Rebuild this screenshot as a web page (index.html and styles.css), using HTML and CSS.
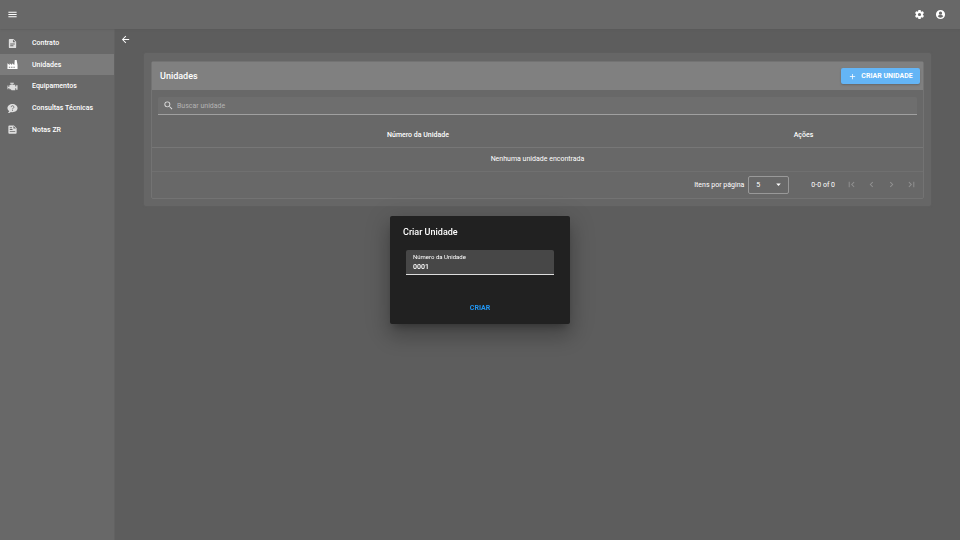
FILE: index.html
```
<!DOCTYPE html>
<html lang="pt-BR">
<head>
<meta charset="utf-8">
<meta name="viewport" content="width=device-width, initial-scale=1">
<title>Unidades</title>
<link rel="stylesheet" href="styles.css">
</head>
<body>
<header class="topbar">
  <button class="icon-btn" type="button" aria-label="Menu"><svg class="icon" viewBox="0 0 24 24"><path d="M3 6h18v2H3V6m0 5h18v2H3v-2m0 5h18v2H3v-2z"/></svg></button>
  <div class="topbar-actions">
    <button class="icon-btn" type="button" aria-label="Configurações"><svg class="icon" viewBox="0 0 24 24"><path d="M12 15.5A3.5 3.5 0 0 1 8.500 12 3.500 3.500 0 0 1 12 8.500a3.500 3.500 0 0 1 3.500 3.500 3.500 3.500 0 0 1-3.500 3.500m7.430-2.530c.04-.32.07-.64.07-.97s-.03-.66-.07-1l2.110-1.630c.19-.15.24-.42.12-.64l-2-3.460c-.12-.22-.39-.31-.61-.22l-2.490 1c-.52-.39-1.060-.73-1.690-.98l-.37-2.650A.506.506 0 0 0 14 2h-4c-.25 0-.46.18-.5.42l-.37 2.650c-.63.25-1.170.59-1.690.98l-2.490-1c-.22-.09-.49 0-.61.22l-2 3.460c-.13.22-.07.49.12.64L4.570 11c-.04.34-.07.67-.07 1s.03.65.07.970l-2.110 1.660c-.19.15-.25.42-.12.64l2 3.460c.12.22.39.3.61.22l2.490-1.010c.52.4 1.060.74 1.690.99l.37 2.650c.04.24.25.42.5.42h4c.25 0 .46-.18.5-.42l.37-2.650c.63-.26 1.170-.59 1.690-.99l2.490 1.010c.22.08.49 0 .61-.22l2-3.460c.12-.22.07-.49-.12-.64l-2.110-1.660z"/></svg></button>
    <button class="icon-btn" type="button" aria-label="Conta"><svg class="icon" viewBox="0 0 24 24"><path fill-rule="evenodd" d="M12 2a10 10 0 1 0 0 20 10 10 0 0 0 0-20zm0 3.500a3.500 3.500 0 1 1 0 7 3.500 3.500 0 0 1 0-7zM12 19.200a7.200 7.200 0 0 1-6-3.200c.03-2 4-3.100 6-3.100s5.970 1.100 6 3.100a7.200 7.200 0 0 1-6 3.200z"/></svg></button>
  </div>
</header>
<div class="shell">
  <nav class="sidebar" aria-label="Principal">
    <ul class="menu">
      <li><a class="menu-link" href="#contrato"><svg class="icon" viewBox="0 0 24 24"><path fill-rule="evenodd" d="M6 2h8l6 6v12a2 2 0 0 1-2 2H6a2 2 0 0 1-2-2V4a2 2 0 0 1 2-2zm7 1.500V9h5.500L13 3.500zM7 12v2h10v-2H7zm0 4v2h7v-2H7z"/></svg>Contrato</a></li>
      <li><a class="menu-link active" aria-current="page" href="#unidades"><svg class="icon" viewBox="0 0 24 24"><path fill-rule="evenodd" d="M1 22V9l5 4V9l5 4V9l5 4 1-11h4l2 11v9H1zm3-5v2h3v-2H4zm5 0v2h3v-2H9zm5 0v2h3v-2h-3z"/></svg>Unidades</a></li>
      <li><a class="menu-link" href="#equipamentos"><svg class="icon" viewBox="0 0 24 24"><path d="M7 4v2h3v2H7l-2 2v3H3v-3H1v8h2v-3h2v3h3l2 2h8v-4h2v3h3V9h-3v3h-2V8h-6V6h3V4H7z"/></svg>Equipamentos</a></li>
      <li><a class="menu-link" href="#consultas"><svg class="icon" viewBox="0 0 24 24"><path d="M12 2c5.500 0 11 3.580 11 9s-5 9-11 9c-1.240 0-2.430-.18-3.530-.5C5.550 22 2 22 2 22c2.330-2.330 2.700-3.900 2.750-4.500C2.500 16 1 14 1 11c0-5 5-9 11-9z"/><path class="icon-cut" d="M9 9a3 3 0 1 1 4.500 2.600c-1 .6-1.500 1-1.500 1.900M12 15v2"/></svg>Consultas Técnicas</a></li>
      <li><a class="menu-link" href="#notas"><svg class="icon" viewBox="0 0 24 24"><path fill-rule="evenodd" d="M5 3h10l6 6v10a2 2 0 0 1-2 2H5a2 2 0 0 1-2-2V5a2 2 0 0 1 2-2zm9 1.500V10h5.500L14 4.500zM6 7v2h5V7H6zm0 4v2h6v-2H6zm0 4v2h12v-2H6z"/></svg>Notas ZR</a></li>
    </ul>
  </nav>
  <main class="content">
    <button class="icon-btn back" type="button" aria-label="Voltar"><svg class="icon" viewBox="0 0 24 24"><path d="M20 11v2H8l5.500 5.500-1.420 1.420L4.160 12l7.920-7.920L13.500 5.500 8 11h12z"/></svg></button>
    <div class="panel">
      <section class="card">
        <div class="card-head">
          <h1 class="title">Unidades</h1>
          <button class="create-btn" type="button"><svg class="icon-small" viewBox="0 0 24 24"><path d="M19 13h-6v6h-2v-6H5v-2h6V5h2v6h6v2z"/></svg>CRIAR UNIDADE</button>
        </div>
        <label class="search">
          <svg class="icon" viewBox="0 0 24 24"><path d="M9.500 3A6.500 6.500 0 0 1 16 9.500c0 1.610-.59 3.090-1.560 4.230l.27.27h.79l5 5-1.500 1.500-5-5v-.79l-.27-.27A6.516 6.516 0 0 1 9.500 16a6.500 6.500 0 0 1 0-13m0 2C7 5 5 7 5 9.500S7 14 9.500 14 14 12 14 9.500 12 5 9.500 5z"/></svg>
          <input type="text" placeholder="Buscar unidade" aria-label="Buscar unidade">
        </label>
        <table class="table">
          <thead><tr><th class="col-number" scope="col">Número da Unidade</th><th scope="col">Ações</th></tr></thead>
          <tbody><tr><td colspan="2">Nenhuma unidade encontrada</td></tr></tbody>
        </table>
        <div class="pager">
          <label for="page-size">Itens por página</label>
          <div class="select-box">
            <select id="page-size"><option>5</option><option>10</option></select>
            <svg class="icon select-arrow" viewBox="0 0 24 24"><path d="M7 10l5 5 5-5H7z"/></svg>
          </div>
          <span class="range">0-0 of 0</span>
          <div class="pages">
            <button class="icon-btn" type="button" disabled aria-label="Primeira página"><svg class="icon" viewBox="0 0 24 24"><path d="M18.410 16.590L13.820 12l4.590-4.590L17 6l-6 6 6 6 1.410-1.410M6 6h2v12H6V6z"/></svg></button>
            <button class="icon-btn" type="button" disabled aria-label="Página anterior"><svg class="icon" viewBox="0 0 24 24"><path d="M15.410 16.580L10.830 12l4.580-4.590L14 6l-6 6 6 6 1.410-1.420z"/></svg></button>
            <button class="icon-btn" type="button" disabled aria-label="Próxima página"><svg class="icon" viewBox="0 0 24 24"><path d="M8.590 16.580L13.170 12 8.590 7.410 10 6l6 6-6 6-1.410-1.420z"/></svg></button>
            <button class="icon-btn" type="button" disabled aria-label="Última página"><svg class="icon" viewBox="0 0 24 24"><path d="M5.590 7.410L10.180 12l-4.590 4.590L7 18l6-6-6-6-1.410 1.410M16 6h2v12h-2V6z"/></svg></button>
          </div>
        </div>
      </section>
    </div>
  </main>
</div>
<div class="overlay">
  <form class="dialog" role="dialog" aria-labelledby="dialog-title">
    <h2 class="title" id="dialog-title">Criar Unidade</h2>
    <div class="field">
      <label for="unit-number">Número da Unidade</label>
      <input id="unit-number" type="text" value="0001">
    </div>
    <button class="submit" type="button">CRIAR</button>
  </form>
</div>
</body>
</html>
```

FILE: styles.css
```
* { box-sizing: border-box; }

body {
  margin: 0;
  min-height: 100vh;
  display: flex;
  flex-direction: column;
  background: #5d5d5d;
  color: #fff;
  font: 500 7px/10px Roboto, "Liberation Sans", sans-serif;
}

button, input, select {
  margin: 0;
  padding: 0;
  border: 0;
  background: none;
  color: inherit;
  font: inherit;
  outline: 0;
}

.icon { display: block; flex: none; width: 11px; height: 11px; fill: currentColor; }
.icon-small { width: 9px; height: 9px; fill: currentColor; }
.icon-cut { fill: none; stroke: #686868; stroke-width: 2; }
.icon-btn { display: block; flex: none; }

.topbar {
  display: flex;
  align-items: center;
  justify-content: space-between;
  height: 29px;
  padding: 0 14px 0 7px;
  background: #686868;
  box-shadow: 0 0 2px #555;
  z-index: 1;
}

.topbar-actions { display: flex; gap: 10px; }

.shell { flex: 1; display: flex; }

.sidebar {
  flex: none;
  width: 115px;
  padding-top: 3px;
  background: #686868;
  border-right: 1px solid #626262;
}

.menu {
  display: grid;
  grid-auto-rows: 1fr;
  min-height: 108px;
  margin: 0;
  padding: 0;
  list-style: none;
}

.menu-link {
  display: flex;
  align-items: center;
  gap: 14px;
  height: 100%;
  padding: 1px 0 0 7px;
  color: #fff;
  text-decoration: none;
}

.menu-link .icon { color: #dedede; }
.menu-link.active { background: #7b7b7b; }
.menu-link.active .icon { color: #fff; }

.content { flex: 1; min-width: 0; padding: 5px 29px 0; }
.back { margin-left: -24px; }

.panel {
  margin-top: 8px;
  padding: 8px 7px 7px;
  background: #666;
  border-radius: 2px;
  box-shadow: 0 0 2px #626262;
}

.card { background: #686868; border: 1px solid #737373; border-radius: 2px; }

.card-head {
  display: flex;
  align-items: center;
  justify-content: space-between;
  height: 28px;
  padding: 0 3px 0 8px;
  background: #808080;
}

.title { margin: 0; font-size: 9px; line-height: 12px; font-weight: 500; }

.create-btn {
  display: flex;
  align-items: center;
  justify-content: center;
  gap: 4px;
  min-width: 79px;
  height: 16px;
  border-radius: 2px;
  background: #64b5f6;
  box-shadow: 0 1px 2px #666;
}

.create-btn, .submit { font-weight: 700; }

.search {
  display: flex;
  align-items: center;
  gap: 3px;
  height: 18px;
  margin: 7px 6px 0;
  padding-left: 5px;
  background: #6e6e6e;
  border-bottom: 1px solid #a0a0a0;
  border-radius: 2px 2px 0 0;
}

.search .icon { color: #e0e0e0; }
.search input { flex: 1; min-width: 0; font-weight: 400; }
.search input::placeholder { color: #b4b4b4; opacity: 1; }

.table, .pager { font-weight: 400; }
.table { width: 100%; border-collapse: collapse; text-align: center; }
.table th { height: 32px; padding: 8px 0 0; font-weight: 500; border-bottom: 1px solid #777; }
.table td { height: 24px; padding: 0; border-bottom: 1px solid #707070; }
.table .col-number { width: 69%; }

.pager {
  display: flex;
  align-items: center;
  justify-content: flex-end;
  height: 26px;
  padding-right: 6px;
}

.select-box { position: relative; margin: 0 22px 0 4px; }
.select-box select {
  display: block;
  appearance: none;
  width: 41px;
  height: 18px;
  padding-left: 7px;
  border: 1px solid #999;
  border-radius: 2px;
}
.select-arrow { position: absolute; top: 3px; right: 5px; pointer-events: none; }
.pages { display: flex; gap: 9px; margin-left: 11px; color: #929292; }

.overlay { position: fixed; inset: 0; display: grid; place-items: center; z-index: 2; }

.dialog {
  display: flex;
  flex-direction: column;
  width: 180px;
  padding: 10px 13px;
  border-radius: 2px;
  background: #212121;
  box-shadow: 0 6px 8px -4px rgba(0, 0, 0, .3), 0 12px 20px 2px rgba(0, 0, 0, .16), 0 5px 24px 4px rgba(0, 0, 0, .12);
}

.field {
  display: flex;
  flex-direction: column;
  margin: 12px 3px 26px;
  padding: 2px 7px;
  background: #474747;
  border-bottom: 1px solid #ddd;
  border-radius: 2px 2px 0 0;
}

.field label { font-size: 6px; line-height: 10px; font-weight: 400; }
.field input { height: 10px; }
.submit { align-self: center; height: 13px; color: #2196f3; }
```
